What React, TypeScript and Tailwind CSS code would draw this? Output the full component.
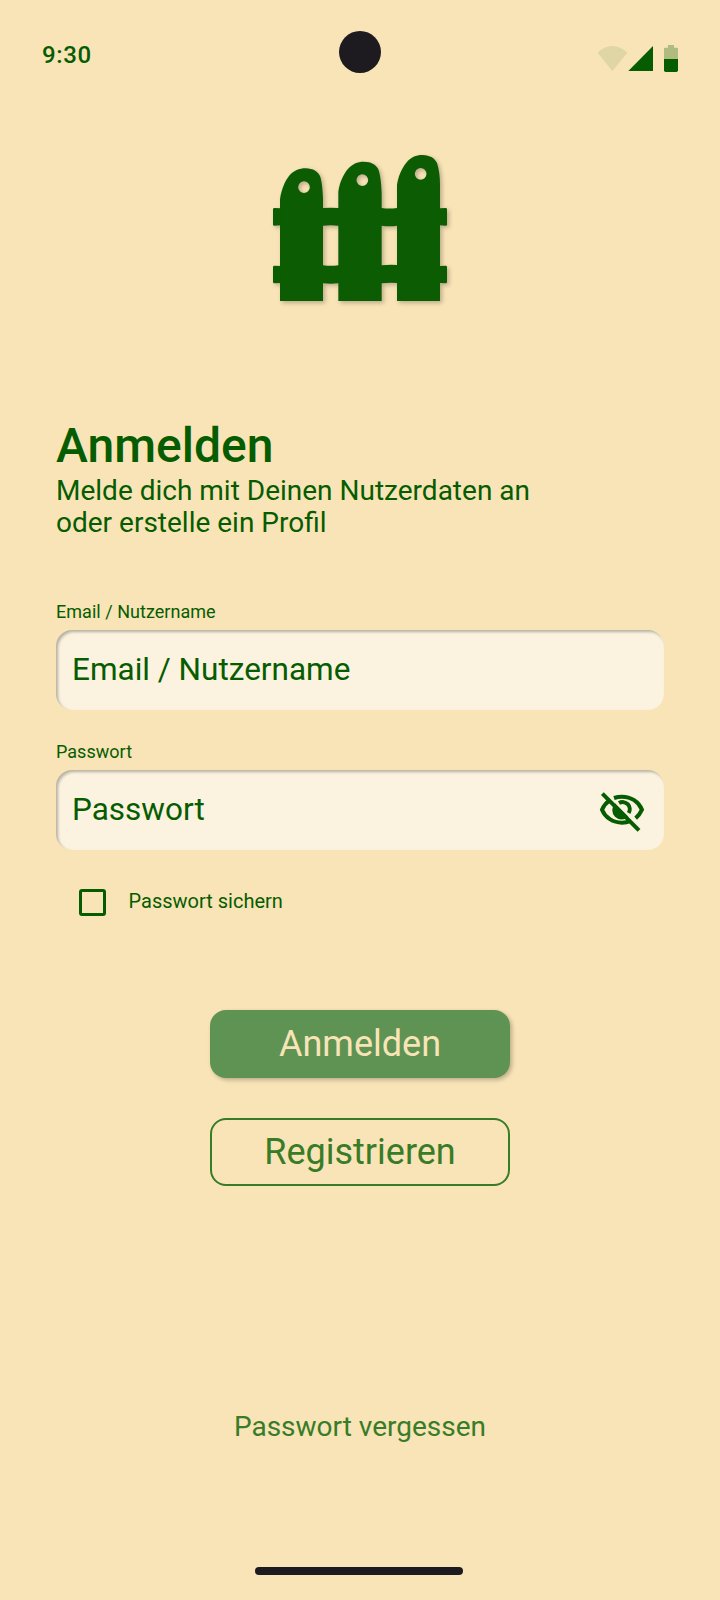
import React from "react";

function StatusBar() {
  return (
    <header className="flex h-[105px] items-start justify-between pl-[42px] pr-[42px]">
      <span className="mt-[39px] w-[80px] text-[24px] font-medium leading-[32px] tracking-[0.6px]">9:30</span>
      <span className="mt-[31px] size-[42px] rounded-full bg-[#1d1b20]" />
      <svg className="mt-[30px] h-[60px] w-[80px]" viewBox="54 0 240 180" overflow="visible">
        <path d="M53 68Q73 48 97 48T142 68L97 123Z" fill="#065c00" fillOpacity=".1" />
        <path d="M145 123L219 48V123Z" fill="#065c00" />
        <path d="M252 87V57Q252 53 256 53H264V45H282V53H290Q294 53 294 57V87Z" fill="#065c00" fillOpacity=".3" />
        <path d="M252 87H294V121Q294 126 289 126H257Q252 126 252 121Z" fill="#065c00" />
      </svg>
    </header>
  );
}

function FenceLogo() {
  return (
    <svg
      className="mt-[35px] h-[175px] w-[200px] self-center drop-shadow-[2px_2px_2px_rgba(0,0,0,0.25)]"
      viewBox="0 0 600 525"
      fill="#0b5c02"
      fillRule="evenodd"
    >
      <path d="M60 483V178C64 150 74 124 87 108C100 92 118 85 137 85C160 85 174 96 180 108C186 125 188 150 189 175V204Q212 202 235 204V155C239 127 250 104 263 88C276 72 292 65 311 65C335 65 349 75 355 88C361 105 364 130 365 160V204Q388 207 411 204V135C415 107 426 84 439 68C452 52 468 45 487 45C511 45 525 56 531 69C537 86 540 110 540 135V205L557 204Q561 204 561 208V254Q561 257 557 257L540 256V378L557 377Q561 377 561 381V426Q561 430 557 430L540 429V483H411V429Q388 427 365 430V483H235V430Q212 432 189 430V483ZM189 257V376Q212 379 235 376V257Q212 255 189 257ZM365 257V376Q388 373 411 375V257Q388 260 365 257ZM132 124A17.500 17.500 0 1 0 132 159A17.500 17.500 0 1 0 132 124ZM307 103A17.500 17.500 0 1 0 307 138A17.500 17.500 0 1 0 307 103ZM482 84A17.500 17.500 0 1 0 482 119A17.500 17.500 0 1 0 482 84Z" />
      <path d="M62 205L43 204Q39 204 39 208V254Q39 257 43 257L62 256ZM62 378L43 377Q39 377 39 381V426Q39 430 43 430L62 429Z" />
    </svg>
  );
}

function EyeOff() {
  return (
    <svg className="mt-[3px] h-[44px] w-[46px]" viewBox="117 148 138 132" fill="none" stroke="#065c00" strokeWidth="12">
      <path d="M127 159L237 269" />
      <path d="M162 172Q174 168 186 168C213 168 236 183 246 207Q239 222 227 233" />
      <path d="M149 179Q133 190 126 207C136 231 159 246 186 246Q200 246 211 241" />
      <path d="M177 187A21.500 21.500 0 0 1 206 217" />
      <path d="M165 188A27.500 27.500 0 0 0 205 228Z" fill="#065c00" stroke="none" />
    </svg>
  );
}

function Field({ label, children }: { label: string; children?: React.ReactNode }) {
  return (
    <div className="flex flex-col gap-[6px]">
      <span className="text-[18px] leading-[24px] tracking-[0.03px]">{label}</span>
      <div className="flex h-[80px] items-center justify-between rounded-[16px] bg-[#fbf2df] pl-[16px] pr-[19px] shadow-[inset_2px_2px_3px_rgba(0,0,0,0.27)]">
        <span className="text-[31.5px] leading-[40px]">{label}</span>
        {children}
      </div>
    </div>
  );
}

export default function App() {
  return (
    <main className="flex h-[1600px] w-[720px] flex-col overflow-hidden bg-[#f9e4b7] font-['Roboto',sans-serif] text-[#065c00]">
      <StatusBar />
      <FenceLogo />
      <section className="mt-[103px] px-[56px]">
        <h1 className="text-[48px] font-medium leading-[56px]">Anmelden</h1>
        <p className="pt-px text-[28px] leading-[32px]">
          Melde dich mit Deinen Nutzerdaten an
          <br />
          oder erstelle ein Profil
        </p>
      </section>
      <form className="mt-[61px] flex flex-col gap-[30px] px-[56px]">
        <Field label="Email / Nutzername" />
        <Field label="Passwort">
          <EyeOff />
        </Field>
        <label className="mt-[9px] flex h-[27px] items-center gap-[22.5px] pl-[23px]">
          <span className="size-[27px] rounded-[3px] border-[3px] border-[#065c00]" />
          <span className="pb-[3px] text-[20px] leading-[28px]">Passwort sichern</span>
        </label>
      </form>
      <div className="mt-[94px] flex flex-col items-center gap-[40px]">
        <button className="h-[68px] w-[300px] rounded-[16px] bg-[#5e9353] text-[36px] leading-[68px] text-[#f9e4b7] shadow-[2px_2px_4px_rgba(0,0,0,0.25)]">
          Anmelden
        </button>
        <button className="h-[68px] w-[300px] rounded-[16px] border-2 border-[#387c28] text-[36px] leading-[64px] text-[#387c28]">
          Registrieren
        </button>
      </div>
      <a className="mt-[221px] self-center text-[28px] leading-[40px] text-[#387c28]">Passwort vergessen</a>
      <div className="mt-[120px] ml-[255px] h-[8px] w-[208px] rounded-full bg-[#1d1b20]" />
    </main>
  );
}
